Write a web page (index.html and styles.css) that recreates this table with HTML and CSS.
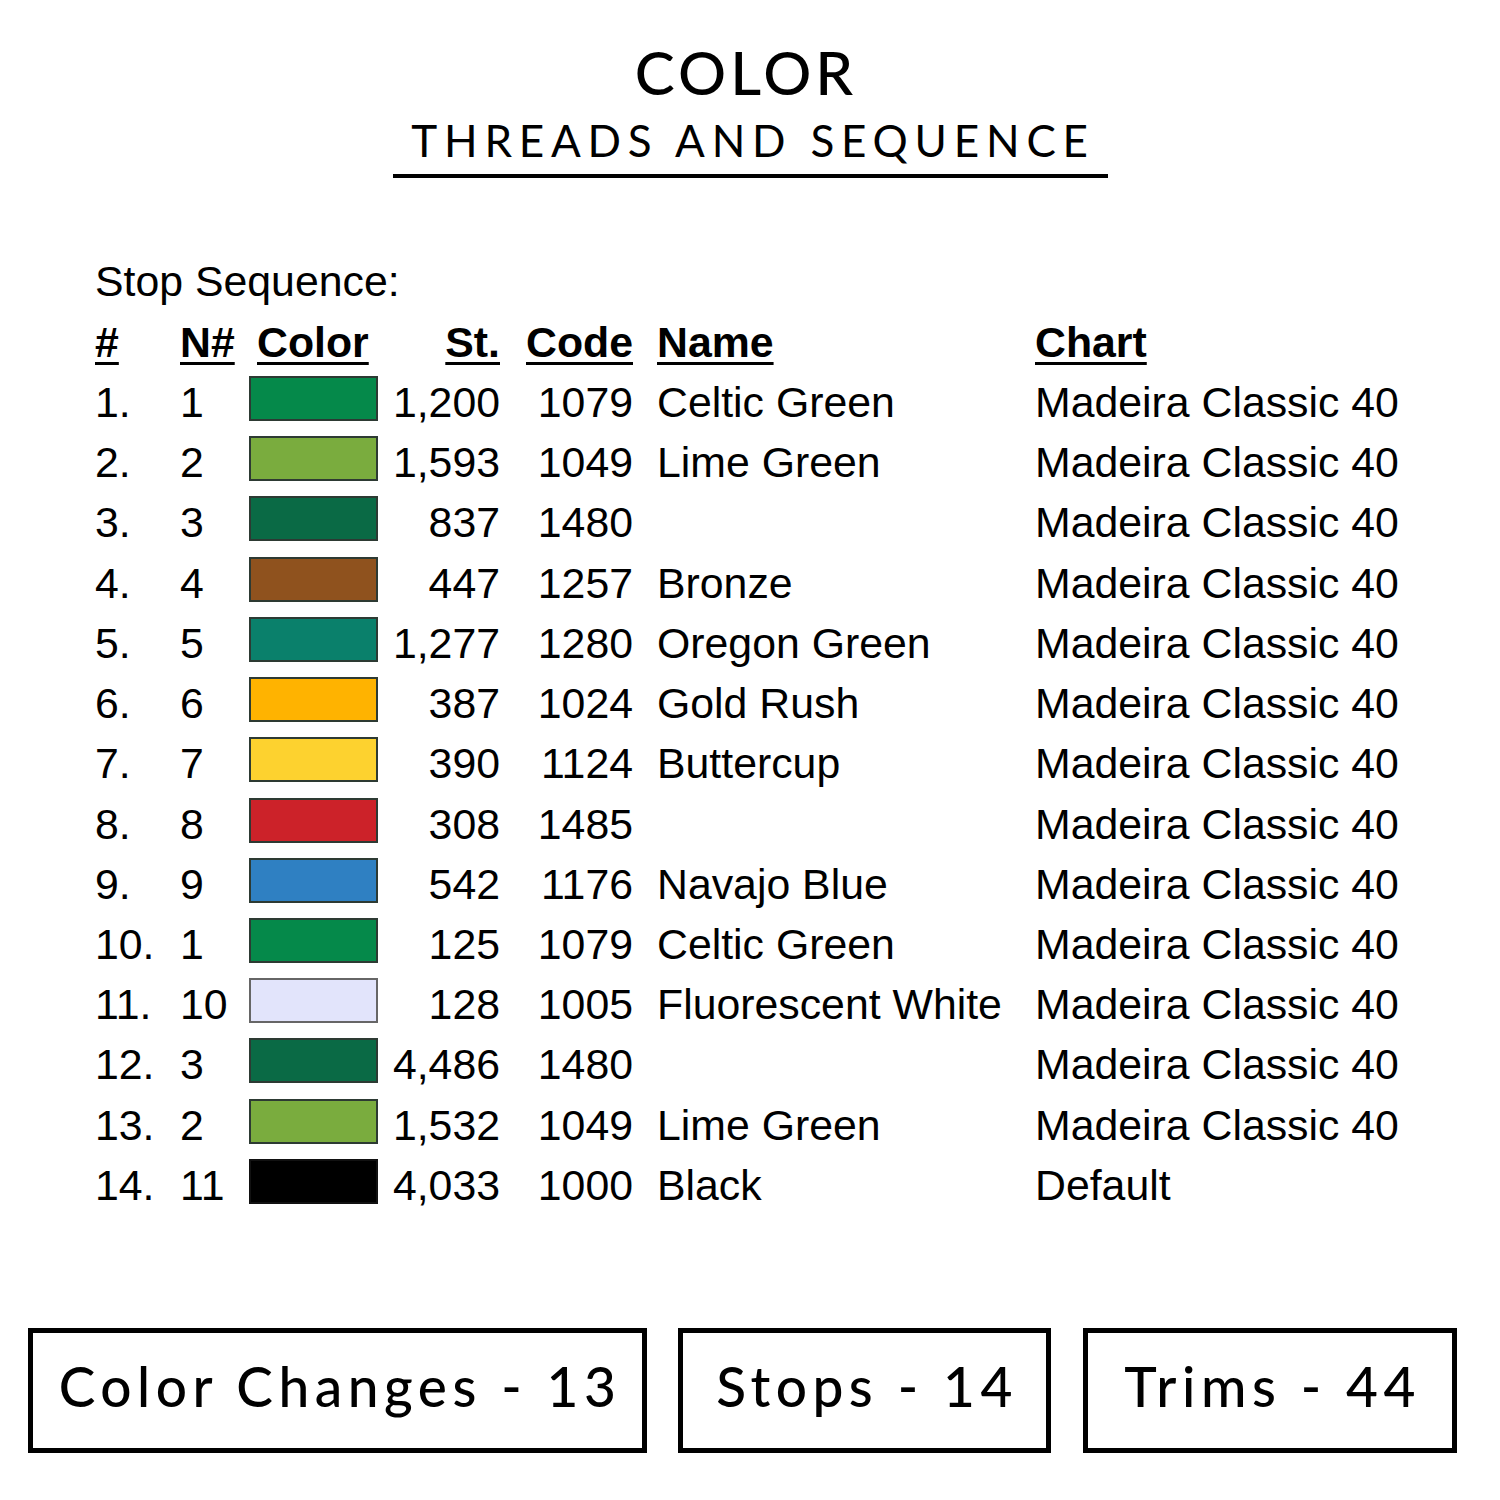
FILE: index.html
```html
<!DOCTYPE html>
<html>
<head>
<meta charset="utf-8">
<link rel="stylesheet" href="styles.css">
</head>
<body>
<div class="page">
  <header class="title">
    <h1 class="title-main">COLOR</h1>
    <h2 class="title-sub">THREADS AND SEQUENCE</h2>
  </header>

  <section class="seq">
    <div class="seq-label">Stop Sequence:</div>
    <div class="row head">
      <span class="c-num"><u>#</u></span>
      <span class="c-n"><u>N#</u></span>
      <span class="c-sw c-sw-head"><u>Color</u></span>
      <span class="c-st"><u>St.</u></span>
      <span class="c-code"><u>Code</u></span>
      <span class="c-name"><u>Name</u></span>
      <span class="c-chart"><u>Chart</u></span>
    </div>
    <div class="row"><span class="c-num">1.</span><span class="c-n">1</span><span class="c-sw"><i class="sw sw-celtic"></i></span><span class="c-st">1,200</span><span class="c-code">1079</span><span class="c-name">Celtic Green</span><span class="c-chart">Madeira Classic 40</span></div>
    <div class="row"><span class="c-num">2.</span><span class="c-n">2</span><span class="c-sw"><i class="sw sw-lime"></i></span><span class="c-st">1,593</span><span class="c-code">1049</span><span class="c-name">Lime Green</span><span class="c-chart">Madeira Classic 40</span></div>
    <div class="row"><span class="c-num">3.</span><span class="c-n">3</span><span class="c-sw"><i class="sw sw-dark"></i></span><span class="c-st">837</span><span class="c-code">1480</span><span class="c-name"></span><span class="c-chart">Madeira Classic 40</span></div>
    <div class="row"><span class="c-num">4.</span><span class="c-n">4</span><span class="c-sw"><i class="sw sw-bronze"></i></span><span class="c-st">447</span><span class="c-code">1257</span><span class="c-name">Bronze</span><span class="c-chart">Madeira Classic 40</span></div>
    <div class="row"><span class="c-num">5.</span><span class="c-n">5</span><span class="c-sw"><i class="sw sw-oregon"></i></span><span class="c-st">1,277</span><span class="c-code">1280</span><span class="c-name">Oregon Green</span><span class="c-chart">Madeira Classic 40</span></div>
    <div class="row"><span class="c-num">6.</span><span class="c-n">6</span><span class="c-sw"><i class="sw sw-gold"></i></span><span class="c-st">387</span><span class="c-code">1024</span><span class="c-name">Gold Rush</span><span class="c-chart">Madeira Classic 40</span></div>
    <div class="row"><span class="c-num">7.</span><span class="c-n">7</span><span class="c-sw"><i class="sw sw-butter"></i></span><span class="c-st">390</span><span class="c-code">1124</span><span class="c-name">Buttercup</span><span class="c-chart">Madeira Classic 40</span></div>
    <div class="row"><span class="c-num">8.</span><span class="c-n">8</span><span class="c-sw"><i class="sw sw-red"></i></span><span class="c-st">308</span><span class="c-code">1485</span><span class="c-name"></span><span class="c-chart">Madeira Classic 40</span></div>
    <div class="row"><span class="c-num">9.</span><span class="c-n">9</span><span class="c-sw"><i class="sw sw-blue"></i></span><span class="c-st">542</span><span class="c-code">1176</span><span class="c-name">Navajo Blue</span><span class="c-chart">Madeira Classic 40</span></div>
    <div class="row"><span class="c-num">10.</span><span class="c-n">1</span><span class="c-sw"><i class="sw sw-celtic"></i></span><span class="c-st">125</span><span class="c-code">1079</span><span class="c-name">Celtic Green</span><span class="c-chart">Madeira Classic 40</span></div>
    <div class="row"><span class="c-num">11.</span><span class="c-n">10</span><span class="c-sw"><i class="sw sw-white"></i></span><span class="c-st">128</span><span class="c-code">1005</span><span class="c-name">Fluorescent White</span><span class="c-chart">Madeira Classic 40</span></div>
    <div class="row"><span class="c-num">12.</span><span class="c-n">3</span><span class="c-sw"><i class="sw sw-dark"></i></span><span class="c-st">4,486</span><span class="c-code">1480</span><span class="c-name"></span><span class="c-chart">Madeira Classic 40</span></div>
    <div class="row"><span class="c-num">13.</span><span class="c-n">2</span><span class="c-sw"><i class="sw sw-lime"></i></span><span class="c-st">1,532</span><span class="c-code">1049</span><span class="c-name">Lime Green</span><span class="c-chart">Madeira Classic 40</span></div>
    <div class="row"><span class="c-num">14.</span><span class="c-n">11</span><span class="c-sw"><i class="sw sw-black"></i></span><span class="c-st">4,033</span><span class="c-code">1000</span><span class="c-name">Black</span><span class="c-chart">Default</span></div>
  </section>

  <footer class="stats">
    <div class="stat stat-wide">Color Changes - 13</div>
    <div class="stat">Stops - 14</div>
    <div class="stat stat-trims">Trims - 44</div>
  </footer>
</div>
</body>
</html>
```

FILE: styles.css
```css
* { box-sizing: border-box; }
html, body { margin: 0; padding: 0; background: #fff; }
body { width: 1500px; height: 1500px; overflow: hidden; color: #000; }

.page { width: 1500px; height: 1500px; padding-top: 42px; }

.title { display: flex; flex-direction: column; align-items: center; }
.title-main {
  margin: 0 0 0 -12px;
  font-family: "Lato", "Noto Sans", sans-serif;
  font-weight: 500;
  font-size: 60px;
  line-height: 1;
  letter-spacing: 4px;
  padding-left: 4px;
}
.title-sub {
  margin: 16px 0 0 0;
  width: 715px;
  text-align: center;
  font-family: "Lato", "Noto Sans", sans-serif;
  font-weight: 400;
  font-size: 44px;
  line-height: 1;
  letter-spacing: 6.8px;
  padding-left: 6px;
  padding-bottom: 12px;
  border-bottom: 4px solid #000;
}

.seq {
  margin-top: 76px;
  padding-left: 95px;
  font-family: "Liberation Sans", Arial, sans-serif;
  font-size: 42.8px;
}
.seq-label { height: 58px; line-height: 54px; }
.row {
  display: grid;
  grid-template-columns: 85px 69px 129px 122px 133px 402px 400px;
  height: 60.23px;
  line-height: 60px;
  white-space: nowrap;
}
.head { font-weight: bold; height: 60px; }
.head u { text-decoration-thickness: 3px; text-underline-offset: 5px; }
.c-st, .c-code { text-align: right; }
.c-name { padding-left: 24px; }
.c-sw { display: flex; align-items: flex-start; }
.c-sw-head { padding-left: 8px; }
.sw {
  display: block;
  width: 129px;
  height: 45px;
  margin-top: 4px;
  border: 2px solid #2d3a33;
}
.sw-celtic { background: #05894a; }
.sw-lime { background: #7aac3e; }
.sw-dark { background: #0a6a45; }
.sw-bronze { background: #8f521e; }
.sw-oregon { background: #0a806b; }
.sw-gold { background: #ffb300; }
.sw-butter { background: #fdd22f; }
.sw-red { background: #cc2229; }
.sw-blue { background: #2f80c2; }
.sw-white { background: #e2e4fb; border-color: #666; }
.sw-black { background: #000; border-color: #111; }

.stats {
  margin-top: 113px;
  padding-left: 28px;
  display: flex;
  gap: 31px;
}
.stat {
  width: 373px;
  height: 125px;
  border: 5px solid #000;
  display: flex;
  align-items: center;
  justify-content: center;
  font-family: "Lato", "Noto Sans", sans-serif;
  font-weight: 500;
  font-size: 55px;
  letter-spacing: 5.5px;
  padding-left: 5px;
  padding-bottom: 10px;
}
.stat-wide { width: 619px; }
.stat-trims { width: 374px; margin-left: 1px; }
```
